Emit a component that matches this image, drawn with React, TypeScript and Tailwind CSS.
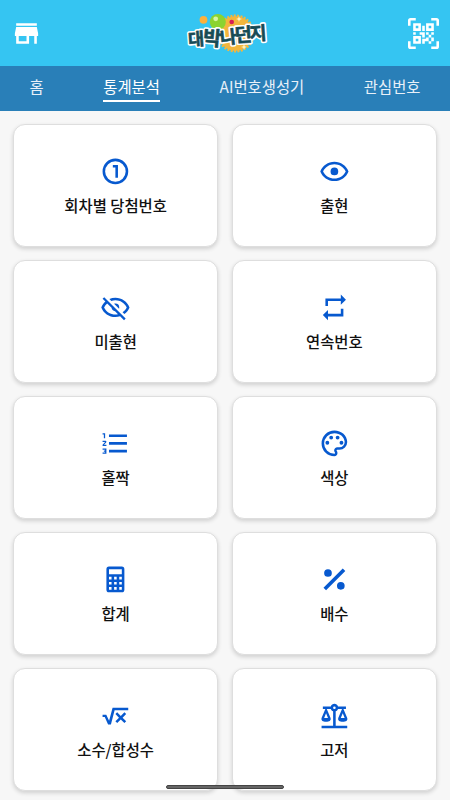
import React from "react";

const icons: Record<string, string> = {
  store: "M20 4H4v2h16V4zm1 10v-2l-1-5H4l-1 5v2h1v6h10v-6h4v6h2v-6h1zm-9 4H6v-4h6v4z",
  qr: "M4,4H10V10H4V4M20,4V10H14V4H20M14,15H16V13H14V11H16V13H18V11H20V13H18V15H20V18H18V20H16V18H13V20H11V16H14V15M16,15V18H18V15H16M4,20V14H10V20H4M6,6V8H8V6H6M16,6V8H18V6H16M6,16V18H8V16H6M4,11H6V13H4V11M9,11H13V15H11V13H9V11M11,6H13V10H11V6M2,2V6H0V2A2,2 0 0,1 2,0H6V2H2M22,0A2,2 0 0,1 24,2V6H22V2H18V0H22M2,18V22H6V24H2A2,2 0 0,1 0,22V18H2M22,22V18H24V22A2,2 0 0,1 22,24H18V22H22Z",
  one: "M12,2A10,10 0 1,0 12,22A10,10 0 1,0 12,2M12,4A8,8 0 1,1 12,20A8,8 0 1,1 12,4M10,7V9H12V17H14V7H10Z",
  eye: "M12,9A3,3 0 1,1 12,15A3,3 0 1,1 12,9M12,4.5C17,4.5 21.27,7.61 23,12C21.27,16.39 17,19.5 12,19.5C7,19.5 2.73,16.39 1,12C2.73,7.61 7,4.5 12,4.5M3.18,12C4.83,15.36 8.24,17.5 12,17.5C15.76,17.5 19.17,15.36 20.82,12C19.17,8.64 15.76,6.5 12,6.5C8.24,6.5 4.83,8.64 3.18,12Z",
  eyeOff: "M2,5.27L3.28,4L20,20.72L18.73,22L15.65,18.92C14.5,19.3 13.28,19.5 12,19.5C7,19.5 2.73,16.39 1,12C1.69,10.24 2.79,8.69 4.19,7.46L2,5.27M12,9A3,3 0 0,1 15,12C15,12.35 14.94,12.69 14.83,13L11,9.17C11.31,9.06 11.65,9 12,9M12,4.5C17,4.5 21.27,7.61 23,12C22.18,14.08 20.79,15.88 19,17.19L17.58,15.76C18.94,14.82 20.06,13.54 20.82,12C19.17,8.64 15.76,6.5 12,6.5C10.91,6.5 9.84,6.68 8.84,7L7.3,5.47C8.74,4.85 10.33,4.5 12,4.5M3.18,12C4.83,15.36 8.24,17.5 12,17.5C12.69,17.5 13.37,17.43 14,17.29L11.72,15C10.29,14.85 9.15,13.71 9,12.28L5.6,8.87C4.61,9.72 3.78,10.78 3.18,12Z",
  repeat: "M17,17H7V14L3,18L7,22V19H19V13H17M7,7H17V10L21,6L17,2V5H5V11H7V7Z",
  list: "M7,13V11H21V13H7M7,19V17H21V19H7M7,7V5H21V7H7M3,8V5H2V4H4V8H3M2,17V16H5V20H2V19H4V18.5H3V17.5H4V17H2M4.25,10A0.75,0.75 0 0,1 5,10.75C5,10.95 4.92,11.14 4.79,11.27L3.12,13H5V14H2V13.08L4,11H2V10H4.25Z",
  palette: "M12,22A10,10 0 0,1 2,12A10,10 0 0,1 12,2C17.5,2 22,6 22,11A6,6 0 0,1 16,17H14.2C13.9,17 13.7,17.2 13.7,17.5C13.7,17.6 13.8,17.7 13.8,17.8C14.2,18.3 14.4,18.9 14.4,19.5C14.5,20.9 13.4,22 12,22M12,4A8,8 0 0,0 4,12A8,8 0 0,0 12,20C12.3,20 12.5,19.8 12.5,19.5C12.5,19.3 12.4,19.2 12.4,19.1C12,18.6 11.8,18.1 11.8,17.5C11.8,16.1 12.9,15 14.3,15H16A4,4 0 0,0 20,11C20,7.1 16.4,4 12,4M6.5,10A1.5,1.5 0 1,1 6.5,13A1.5,1.5 0 1,1 6.5,10M9.5,6A1.5,1.5 0 1,1 9.5,9A1.5,1.5 0 1,1 9.5,6M14.5,6A1.5,1.5 0 1,1 14.5,9A1.5,1.5 0 1,1 14.5,6M17.5,10A1.5,1.5 0 1,1 17.5,13A1.5,1.5 0 1,1 17.5,10Z",
  calc: "M7,2H17A2,2 0 0,1 19,4V20A2,2 0 0,1 17,22H7A2,2 0 0,1 5,20V4A2,2 0 0,1 7,2M7,4V8H17V4H7M7,10V12H9V10H7M11,10V12H13V10H11M15,10V12H17V10H15M7,14V16H9V14H7M11,14V16H13V14H11M15,14V16H17V14H15M7,18V20H9V18H7M11,18V20H13V18H11M15,18V20H17V18H15Z",
  percent: "M18.5,3.5L3.5,18.5L5.5,20.5L20.5,5.5ZM7,4A3,3 0 0,0 4,7A3,3 0 0,0 7,10A3,3 0 0,0 10,7A3,3 0 0,0 7,4M17,14A3,3 0 0,0 14,17A3,3 0 0,0 17,20A3,3 0 0,0 20,17A3,3 0 0,0 17,14Z",
  root: "M2,11.4H4.9L7.1,16.2L9.8,6H22V8H11.4L8.5,19H6.3L3.7,13.3H2ZM13.4,9.6L16.2,12.4L19,9.6L20.4,11L17.6,13.8L20.4,16.6L19,18L16.2,15.2L13.4,18L12,16.6L14.8,13.8L12,11Z",
  scale: "M12,3C10.73,3 9.6,3.8 9.18,5H3V7H4.95L2,14C1.53,16 3,17 5.5,17C8,17 9.56,16 9,14L6.05,7H9.17C9.5,7.85 10.15,8.5 11,8.83V20H2V22H22V20H13V8.82C13.85,8.5 14.5,7.85 14.82,7H17.95L15,14C14.53,16 16,17 18.5,17C21,17 22.56,16 22,14L19.05,7H21V5H14.83C14.4,3.8 13.27,3 12,3M12,5A1,1 0 0,1 13,6A1,1 0 0,1 12,7A1,1 0 0,1 11,6A1,1 0 0,1 12,5M5.5,10.25L7,14H4L5.5,10.25M18.5,10.25L20,14H17L18.5,10.25Z",
};

function Icon({ name, className }: { name: string; className: string }) {
  return (
    <svg viewBox="0 0 24 24" fill="currentColor" fillRule="evenodd" className={className}>
      <path d={icons[name]} />
    </svg>
  );
}

const glyphs = [
  { ch: "대", x: 16, y: 33, r: -4, s: 17.5 },
  { ch: "박", x: 32.3, y: 32.8, r: 5, s: 20 },
  { ch: "나", x: 48.2, y: 31.2, r: -6, s: 18 },
  { ch: "던", x: 63.2, y: 29, r: -3, s: 19 },
  { ch: "지", x: 78, y: 27.3, r: -4, s: 18.5 },
];

function Logo() {
  return (
    <svg viewBox="0 0 95 55" className="h-[55px] w-[95px]">
      <circle cx="23.5" cy="13.8" r="3.9" fill="#fbb13c" />
      <circle cx="55.5" cy="27.5" r="17.2" fill="#f3b63d" />
      <circle cx="55.5" cy="27.5" r="17.8" fill="none" stroke="#f3b63d" strokeWidth="2.4" strokeDasharray="2 1.4" />
      <circle cx="37.8" cy="16" r="8" fill="#8bd330" />
      <circle cx="35.7" cy="12.8" r="2.4" fill="#d9f5a4" />
      <circle cx="51.7" cy="16" r="2.3" fill="#d91d55" />
      <path d="M59 10l.8 2.2L62 13l-2.2.8L59 16l-.8-2.2L56 13l2.2-.8zM64 38l.8 2.2L67 41l-2.2.8L64 44l-.8-2.2L61 41l2.2-.8z" fill="#fff3c4" />
      {["#ffffff", "#174b55"].map((color, layer) => (
        <g
          key={color}
          fill={color}
          stroke={color}
          strokeWidth={layer === 0 ? 3.8 : 0.6}
          strokeLinejoin="round"
          textAnchor="middle"
          aria-hidden={layer === 0}
          className="font-['Noto_Sans_CJK_KR',sans-serif] font-bold"
        >
          {glyphs.map((g) => (
            <text key={g.ch} x={g.x} y={g.y + 6.5} fontSize={g.s} transform={`rotate(${g.r} ${g.x} ${g.y})`}>
              {g.ch}
            </text>
          ))}
        </g>
      ))}
    </svg>
  );
}

const cards = [
  ["one", "회차별 당첨번호"],
  ["eye", "출현"],
  ["eyeOff", "미출현"],
  ["repeat", "연속번호"],
  ["list", "홀짝"],
  ["palette", "색상"],
  ["calc", "합계"],
  ["percent", "배수"],
  ["root", "소수/합성수"],
  ["scale", "고저"],
];

export default function App() {
  return (
    <div className="relative flex h-[800px] w-[450px] flex-col overflow-hidden bg-[#f7f7f7] font-['Noto_Sans_CJK_KR',sans-serif]">
      <header className="grid h-[66px] shrink-0 grid-cols-[169.5px_95px_1fr] items-center bg-[#35c5f2] pr-[11px] pl-[10.5px] text-white">
        <Icon name="store" className="size-[31px]" />
        <Logo />
        <Icon name="qr" className="size-[31px] justify-self-end" />
      </header>
      <nav className="flex h-[44.5px] shrink-0 items-start justify-between bg-[#297fb8] pt-[9px] pr-[29.5px] pl-[29.5px] text-[15.4px] leading-[22px] text-[#e8f0f8]">
        <span>홈</span>
        <span className="border-b-2 border-white pb-[3px] text-white">통계분석</span>
        <span>AI번호생성기</span>
        <span>관심번호</span>
      </nav>
      <main className="grid shrink-0 grid-cols-2 gap-x-[13.5px] gap-y-[13.5px] px-[13px] pt-[13.5px]">
        {cards.map(([icon, label]) => (
          <div
            key={label}
            className="flex h-[122.6px] flex-col items-center rounded-[12px] border border-[#dedede] bg-white pt-[31.1px] shadow-[0_2px_4px_rgba(0,0,0,0.16)]"
          >
            <Icon name={icon} className="size-[30.8px] text-[#0759cf]" />
            <span className="mt-[7px] text-[15.4px] leading-[22px] font-medium text-[#111]">{label}</span>
          </div>
        ))}
      </main>
      <div className="absolute bottom-[11px] left-[166px] h-[4px] w-[118px] rounded-full border border-[#444] bg-[#666]" />
    </div>
  );
}
